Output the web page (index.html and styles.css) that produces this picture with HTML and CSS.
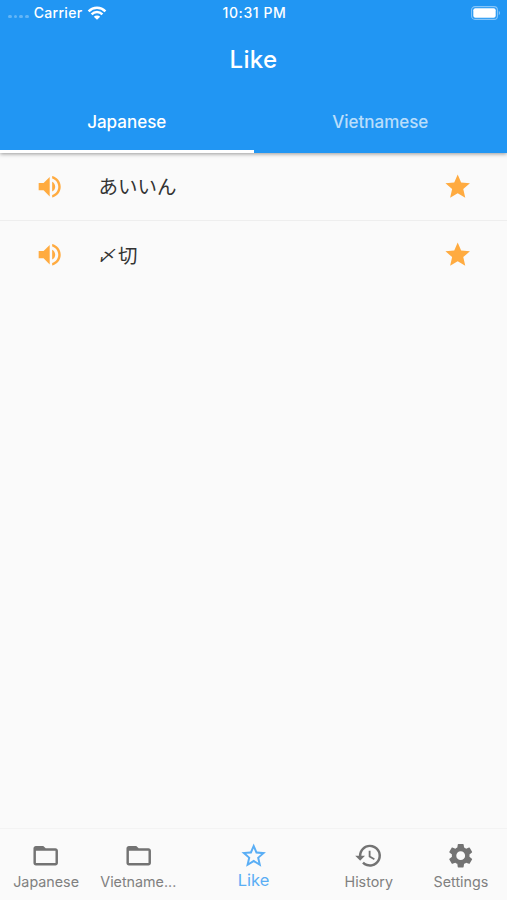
FILE: index.html
```html
<!DOCTYPE html>
<html lang="en">
<head>
    <meta charset="UTF-8">
    <meta name="viewport" content="width=device-width, initial-scale=1.0">
    <title>Like</title>
    <link rel="stylesheet" href="styles.css">
</head>
<body>
    <header class="app-bar">
        <div class="status-bar">
            <div class="carrier">
                <span class="signal"><i></i><i></i><i></i><i></i></span>
                <span>Carrier</span>
                <svg class="wifi" viewBox="0 0 20 14">
                    <path d="M1.6 5.3a12 12 0 0 1 16.8 0M4.6 8.3a7.7 7.7 0 0 1 10.8 0" fill="none" stroke="#fff" stroke-width="2.5"/>
                    <path d="M10 13.8L6.8 10.7a4.6 4.6 0 0 1 6.4 0z" fill="#fff"/>
                </svg>
            </div>
            <div class="time">10:31 PM</div>
            <div class="battery-box">
                <svg class="battery" viewBox="0 0 30 14">
                    <rect x="0.6" y="0.6" width="25.8" height="12.8" rx="3.4" fill="none" stroke="#fff" stroke-opacity="0.45" stroke-width="1.1"/>
                    <rect x="2.3" y="2.3" width="22.4" height="9.4" rx="2" fill="#fff"/>
                    <path d="M27.8 4.8v4.4c1.5-.7 1.5-3.700 0-4.400z" fill="#fff" fill-opacity="0.5"/>
                </svg>
            </div>
        </div>
        <h1>Like</h1>
        <div class="tabs">
            <a class="tab active">Japanese</a>
            <a class="tab">Vietnamese</a>
        </div>
    </header>

    <main>
        <div class="word-row">
            <svg class="icon" viewBox="0 0 24 24"><path d="M3 9v6h4l5 5V4L7 9H3zm13.500 3c0-1.770-1.020-3.290-2.500-4.030v8.050c1.480-.73 2.500-2.250 2.500-4.020zM14 3.230v2.060c2.890.86 5 3.540 5 6.710s-2.110 5.850-5 6.710v2.060c4.010-.91 7-4.490 7-8.770s-2.990-7.860-7-8.770z"/></svg>
            <span class="word" lang="ja">あいいん</span>
            <svg class="icon" viewBox="0 0 24 24"><path d="M12 17.270L18.180 21l-1.640-7.030L22 9.240l-7.190-.61L12 2 9.190 8.630 2 9.240l5.460 4.730L5.820 21z"/></svg>
        </div>
        <div class="word-row">
            <svg class="icon" viewBox="0 0 24 24"><path d="M3 9v6h4l5 5V4L7 9H3zm13.500 3c0-1.770-1.020-3.290-2.500-4.030v8.050c1.480-.73 2.500-2.250 2.500-4.020zM14 3.230v2.060c2.890.86 5 3.540 5 6.710s-2.110 5.850-5 6.710v2.060c4.010-.91 7-4.490 7-8.770s-2.990-7.860-7-8.770z"/></svg>
            <span class="word" lang="ja"><span class="shime">〆</span>切</span>
            <svg class="icon" viewBox="0 0 24 24"><path d="M12 17.270L18.180 21l-1.640-7.030L22 9.240l-7.190-.61L12 2 9.190 8.630 2 9.240l5.460 4.730L5.820 21z"/></svg>
        </div>
    </main>

    <nav class="bottom-nav">
        <a class="nav-item">
            <svg class="icon" viewBox="0 0 24 24"><path d="M20 6h-8l-2-2H4c-1.100 0-1.990.9-1.990 2L2 18c0 1.100.9 2 2 2h16c1.100 0 2-.9 2-2V8c0-1.100-.9-2-2-2zm0 12H4V8h16v10z"/></svg>
            <span>Japanese</span>
        </a>
        <a class="nav-item">
            <svg class="icon" viewBox="0 0 24 24"><path d="M20 6h-8l-2-2H4c-1.100 0-1.990.9-1.990 2L2 18c0 1.100.9 2 2 2h16c1.100 0 2-.9 2-2V8c0-1.100-.9-2-2-2zm0 12H4V8h16v10z"/></svg>
            <span>Vietname...</span>
        </a>
        <a class="nav-item selected">
            <svg class="icon" viewBox="0 0 24 24"><path d="M22 9.240l-7.190-.62L12 2 9.190 8.630 2 9.240l5.460 4.730L5.820 21 12 17.270 18.180 21l-1.630-7.030L22 9.240zM12 15.400l-3.760 2.270 1-4.280-3.320-2.880 4.380-.38L12 6.100l1.710 4.040 4.380.38-3.320 2.880 1 4.280L12 15.400z"/></svg>
            <span>Like</span>
        </a>
        <a class="nav-item">
            <svg class="icon" viewBox="0 0 24 24"><path d="M13 3a9 9 0 0 0-9 9H1l3.890 3.890.07.14L9 12H6a7 7 0 1 1 2.060 4.940l-1.420 1.420A9 9 0 1 0 13 3zm-1 5v5l4.280 2.540.72-1.210-3.500-2.080V8H12z"/></svg>
            <span>History</span>
        </a>
        <a class="nav-item">
            <svg class="icon" viewBox="0 0 24 24"><path d="M19.140 12.940c.04-.3.060-.61.060-.94 0-.32-.02-.64-.07-.94l2.030-1.580c.18-.14.230-.41.120-.61l-1.920-3.320c-.12-.22-.37-.29-.59-.22l-2.390.96c-.5-.38-1.030-.7-1.620-.94l-.36-2.540c-.04-.24-.24-.41-.48-.41h-3.840c-.24 0-.43.17-.47.41l-.36 2.540c-.59.24-1.130.57-1.620.94l-2.390-.96c-.22-.08-.47 0-.59.22L2.740 8.870c-.12.21-.08.47.12.61l2.030 1.580c-.05.3-.09.63-.09.94s.02.64.07.94l-2.030 1.580c-.18.14-.23.41-.12.61l1.920 3.320c.12.22.37.29.59.22l2.390-.96c.5.38 1.030.7 1.620.94l.36 2.540c.05.24.24.41.48.41h3.840c.24 0 .44-.17.47-.41l.36-2.540c.59-.24 1.130-.56 1.620-.94l2.390.96c.22.08.47 0 .59-.22l1.920-3.320c.12-.22.070-.47-.12-.61l-2.010-1.580zM12 15.600A3.600 3.600 0 1 1 12 8.400a3.600 3.600 0 0 1 0 7.200z"/></svg>
            <span>Settings</span>
        </a>
    </nav>
</body>
</html>
```
FILE: styles.css
```css
* {
    box-sizing: border-box;
}

body {
    margin: 0;
    height: 100vh;
    display: flex;
    flex-direction: column;
    overflow: hidden;
    background: #fafafa;
    font-family: 'Inter', sans-serif;
}

/* Blue header with status bar, title and tabs */
.app-bar {
    height: 153px;
    flex-shrink: 0;
    display: flex;
    flex-direction: column;
    background: #2196f3;
    color: white;
    box-shadow: 0 1px 4px rgba(0, 0, 0, 0.4);
    z-index: 1;
}

.status-bar {
    height: 25px;
    display: grid;
    grid-template-columns: 1fr auto 1fr;
    align-items: center;
    padding: 0 6px 0 8px;
    font-size: 14px;
    font-weight: 500;
    letter-spacing: 0.3px;
}

.time {
    letter-spacing: 0.6px;
}

.carrier {
    display: flex;
    align-items: center;
}

.signal {
    display: flex;
    gap: 2px;
    margin: 8px 5px 0 0;
}

.signal i {
    width: 3.700px;
    height: 3.700px;
    border-radius: 50%;
    background: rgba(255, 255, 255, 0.3);
}

.wifi {
    width: 20px;
    height: 14px;
    margin-left: 5px;
}

.battery-box {
    display: flex;
    justify-content: flex-end;
}

.battery {
    width: 30px;
    height: 14px;
}

h1 {
    height: 70px;
    margin: 0;
    font-size: 24px;
    font-weight: 500;
    letter-spacing: 0.3px;
    line-height: 70px;
    text-align: center;
}

.tabs {
    flex: 1;
    display: flex;
}

.tab {
    flex: 1;
    padding-bottom: 2px;
    display: flex;
    align-items: center;
    justify-content: center;
    border-bottom: 3px solid transparent;
    font-size: 17px;
    font-weight: 500;
    color: rgba(255, 255, 255, 0.7);
}

.tab.active {
    color: white;
    border-bottom-color: white;
}

/* Saved words */
main {
    flex: 1;
}

.word-row {
    height: 68px;
    display: flex;
    align-items: center;
    padding: 0 35px;
    border-bottom: 1px solid #eeeeee;
}

.word-row:last-child {
    border-bottom: none;
}

.icon {
    width: 29.400px;
    height: 29.400px;
    flex-shrink: 0;
    fill: currentColor;
}

.word-row .icon {
    color: #ffab40;
}

.word {
    flex: 1;
    margin-left: 34px;
    padding-bottom: 1px;
    font-family: 'Noto Sans CJK JP', sans-serif;
    font-size: 19.500px;
    font-weight: 400;
    line-height: 28px;
    color: #333333;
}

.shime {
    display: inline-block;
    transform: scale(0.9, 0.8) skewX(-12deg);
}

/* Bottom navigation */
.bottom-nav {
    height: 72px;
    flex-shrink: 0;
    display: flex;
    border-top: 1px solid #f3f3f3;
}

.nav-item {
    flex: 1;
    min-width: 0;
    display: flex;
    flex-direction: column;
    align-items: center;
    padding-top: 12px;
    font-size: 14.300px;
    line-height: 23px;
    color: #808080;
}

.nav-item .icon {
    fill: #737373;
}

.nav-item.selected {
    flex: 1.5;
    font-size: 16.500px;
    line-height: 20px;
    color: #5aaef5;
}

.nav-item.selected .icon {
    fill: #5aaef5;
}
```
